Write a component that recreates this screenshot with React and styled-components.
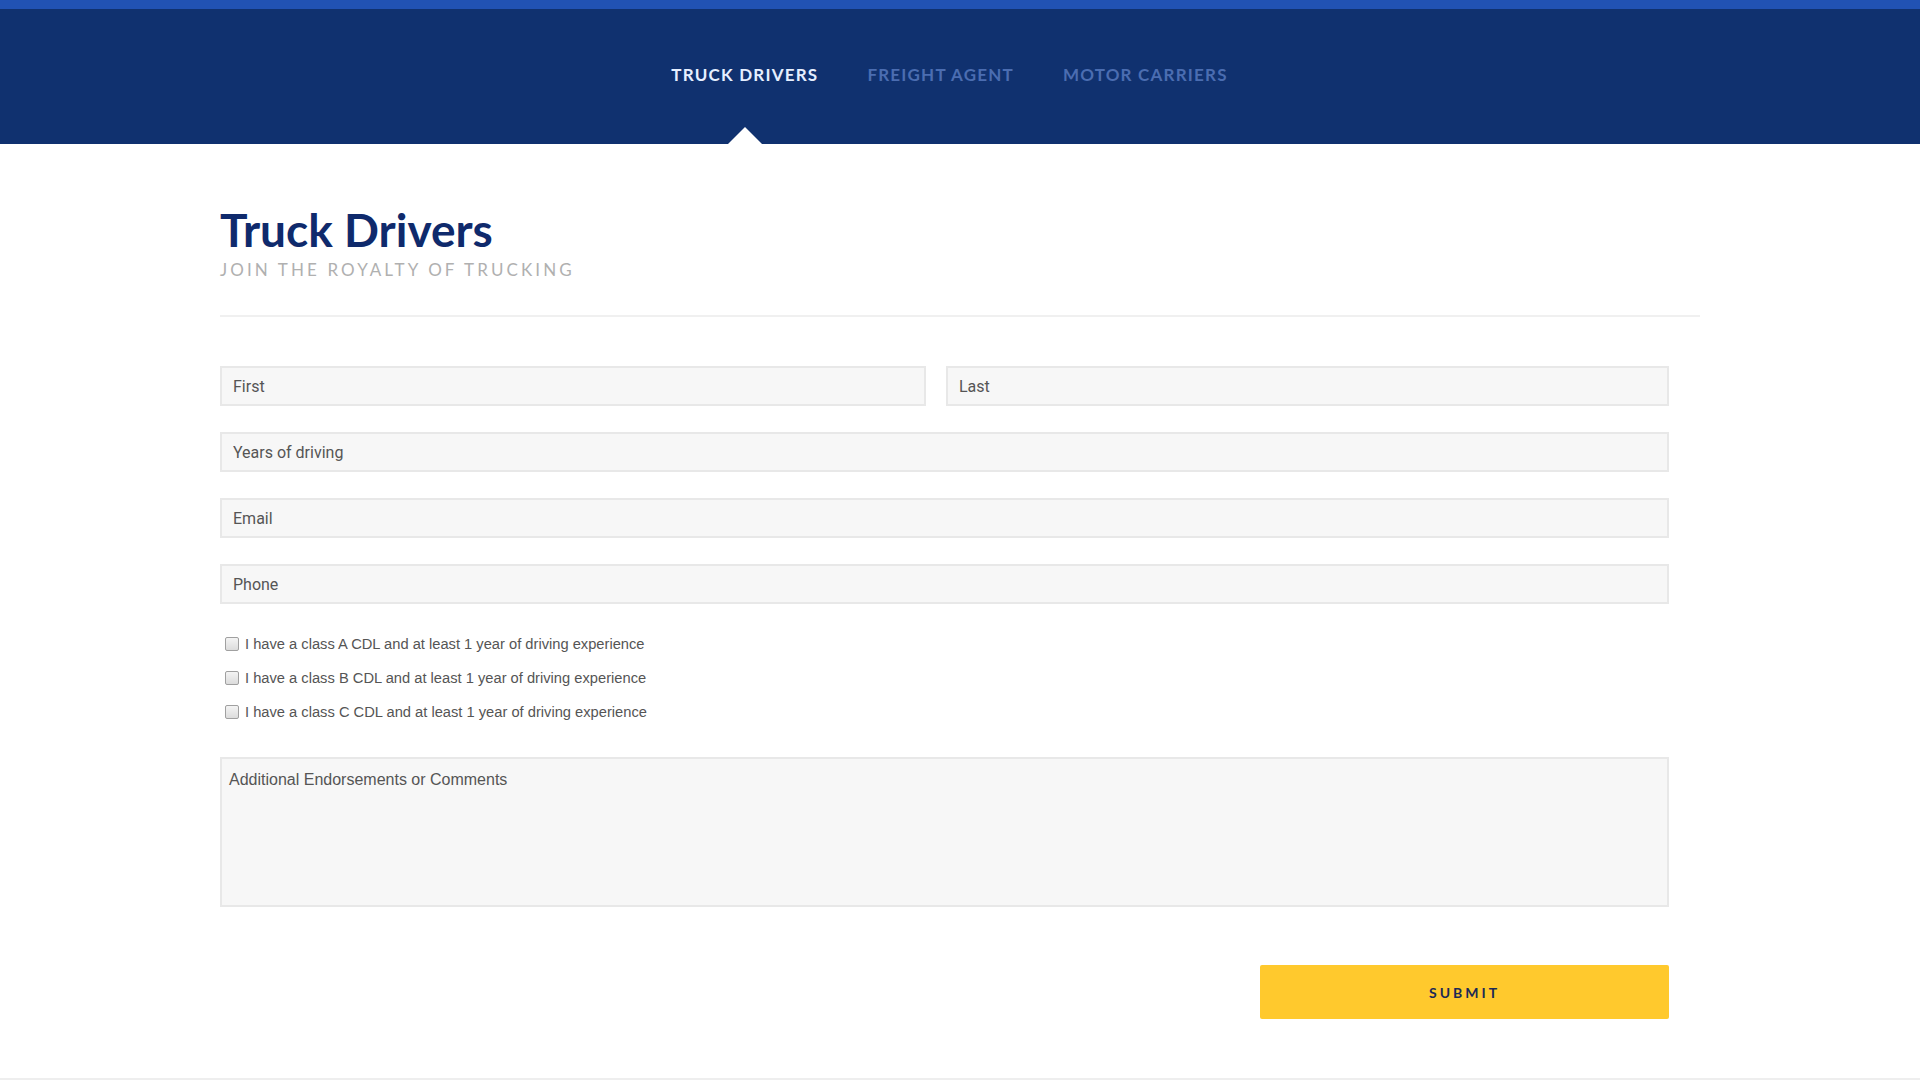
import React from "react";
import styled, { createGlobalStyle } from "styled-components";

const Global = createGlobalStyle`
  * { box-sizing: border-box; }
  html, body { margin: 0; padding: 0; background: #fff; }
  body { font-family: "Liberation Sans", Arial, sans-serif; }
`;

const Page = styled.div`
  width: 1920px;
  height: 1080px;
  display: flex;
  flex-direction: column;
  overflow: hidden;
`;

const Header = styled.header`
  background: #10316f;
  border-top: 9px solid #2152b3;
  height: 144px;
  display: flex;
  align-items: flex-start;
  justify-content: center;
  padding-right: 21px;
`;

const Nav = styled.nav`
  display: flex;
  gap: 49px;
  height: 100%;
`;

const NavItem = styled.a`
  position: relative;
  display: flex;
  align-items: flex-start;
  padding-top: 55px;
  height: 100%;
  font-family: Lato, "Open Sans", sans-serif;
  font-weight: 700;
  font-size: 17px;
  letter-spacing: 1.2px;
  color: ${(p) => (p.$active ? "#e6efff" : "#4b6db1")};
  text-decoration: none;
  cursor: pointer;

  &::after {
    content: "";
    display: ${(p) => (p.$active ? "block" : "none")};
    position: absolute;
    left: 50%;
    bottom: 0;
    transform: translateX(-50%);
    border-left: 17px solid transparent;
    border-right: 17px solid transparent;
    border-bottom: 17px solid #fff;
  }
`;

const Main = styled.main`
  flex: 1;
  width: 1480px;
  margin: 0 auto;
  padding-top: 58px;
`;

const Title = styled.h1`
  margin: 0;
  font-family: Lato, sans-serif;
  font-weight: 700;
  font-size: 46px;
  line-height: 56px;
  color: #0f2a6c;
`;

const Subtitle = styled.p`
  margin: 1px 0 0;
  font-family: Lato, sans-serif;
  font-weight: 400;
  font-size: 17px;
  line-height: 22px;
  letter-spacing: 3.1px;
  color: #b0b0b0;
`;

const Divider = styled.hr`
  margin: 34px 0 0;
  border: 0;
  border-top: 2px solid #f0f0f0;
`;

const Form = styled.form`
  width: 1449px;
  margin-top: 49px;
  display: flex;
  flex-direction: column;
  gap: 26px;
`;

const Row = styled.div`
  display: grid;
  grid-template-columns: ${(p) => p.$cols || "1fr"};
  gap: 20px;
`;

const Input = styled.input`
  height: 40px;
  width: 100%;
  padding: 0 11px;
  background: #f7f7f7;
  border: 2px solid #e8e8e8;
  font-family: Roboto, "Liberation Sans", sans-serif;
  font-size: 16px;
  color: #555;
  outline: none;
  &::placeholder { color: #555; }
`;

const Checks = styled.div`
  display: flex;
  flex-direction: column;
  gap: 14px;
  padding: 4px 0 0 5px;
`;

const CheckRow = styled.label`
  display: flex;
  align-items: center;
  gap: 6px;
  font-family: "Liberation Sans", Arial, sans-serif;
  font-size: 14.7px;
  line-height: 20px;
  color: #555;
`;

const Box = styled.span`
  width: 14px;
  height: 14px;
  border: 1px solid #a0a0a0;
  border-radius: 2px;
  background: linear-gradient(#f4f4f4, #dcdcdc);
`;

const TextArea = styled.textarea`
  margin-top: 9px;
  height: 150px;
  width: 100%;
  resize: none;
  padding: 12px 7px;
  background: #f7f7f7;
  border: 2px solid #e8e8e8;
  font-family: "Liberation Sans", Arial, sans-serif;
  font-size: 16px;
  color: #555;
  outline: none;
  &::placeholder { color: #555; }
`;

const Actions = styled.div`
  width: 1449px;
  display: flex;
  justify-content: flex-end;
  margin-top: 58px;
`;

const Submit = styled.button`
  width: 409px;
  height: 54px;
  border: 0;
  border-radius: 2px;
  background: #ffc92d;
  font-family: Lato, sans-serif;
  font-weight: 700;
  font-size: 14px;
  letter-spacing: 3px;
  color: #1c2a55;
  cursor: pointer;
`;

const Footer = styled.div`
  height: 2px;
  background: #eeeeee;
`;

const checks = ["A", "B", "C"];

export default function App() {
  return (
    <Page>
      <Global />
      <Header>
        <Nav>
          <NavItem $active>TRUCK DRIVERS</NavItem>
          <NavItem>FREIGHT AGENT</NavItem>
          <NavItem>MOTOR CARRIERS</NavItem>
        </Nav>
      </Header>
      <Main>
        <Title>Truck Drivers</Title>
        <Subtitle>JOIN THE ROYALTY OF TRUCKING</Subtitle>
        <Divider />
        <Form onSubmit={(e) => e.preventDefault()}>
          <Row $cols="706px 1fr">
            <Input placeholder="First" />
            <Input placeholder="Last" />
          </Row>
          <Input placeholder="Years of driving" />
          <Input placeholder="Email" />
          <Input placeholder="Phone" />
          <Checks>
            {checks.map((c) => (
              <CheckRow key={c}>
                <Box />
                I have a class {c} CDL and at least 1 year of driving experience
              </CheckRow>
            ))}
          </Checks>
          <TextArea placeholder="Additional Endorsements or Comments" />
        </Form>
        <Actions>
          <Submit>SUBMIT</Submit>
        </Actions>
      </Main>
      <Footer />
    </Page>
  );
}
